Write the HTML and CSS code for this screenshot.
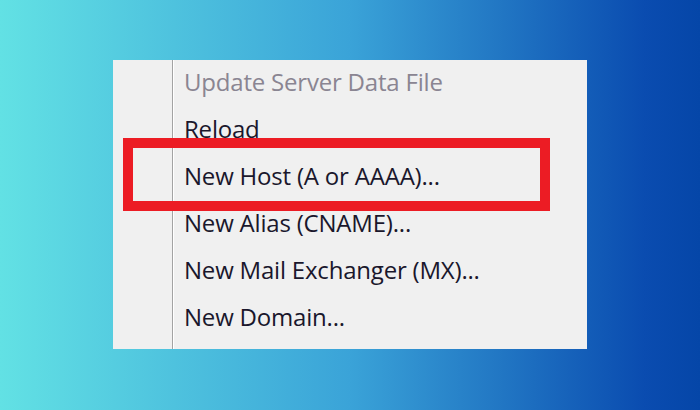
FILE: index.html
```html
<!DOCTYPE html>
<html lang="en">
<head>
<meta charset="utf-8">
<title>DNS context menu</title>
<link rel="stylesheet" href="styles.css">
</head>
<body>
<div class="stage">
  <div class="menu">
    <div class="gutter"></div>
    <ul class="items">
      <li class="item disabled">Update Server Data File</li>
      <li class="item">Reload</li>
      <li class="item highlighted">New Host (A or AAAA)...</li>
      <li class="item">New Alias (CNAME)...</li>
      <li class="item">New Mail Exchanger (MX)...</li>
      <li class="item">New Domain...</li>
    </ul>
    <div class="callout"></div>
  </div>
</div>
</body>
</html>
```
FILE: styles.css
```css
html, body {
  margin: 0;
  padding: 0;
}
body {
  width: 700px;
  height: 410px;
  overflow: hidden;
  font-family: "Open Sans", "Noto Sans", sans-serif;
}
.stage {
  width: 700px;
  height: 410px;
  background: linear-gradient(90deg, #62e1e4 0%, #3aa3d8 50%, #0a4cb0 92%, #0546a8 100%);
  padding: 60px 0 0 113px;
  box-sizing: border-box;
}
.menu {
  position: relative;
  width: 474px;
  height: 289px;
  background: #f0f0f0;
  display: flex;
}
.gutter {
  width: 59px;
  flex: none;
  border-right: 1px solid #a3a3a3;
  box-shadow: 1px 0 0 #ffffff;
}
.items {
  list-style: none;
  margin: -2px 0 0 0;
  padding: 0 0 0 11px;
}
.item {
  height: 47px;
  line-height: 47px;
  font-size: 24px;
  color: #1a172c;
  letter-spacing: -0.2px;
  white-space: nowrap;
}
.item.disabled {
  color: #8a8592;
}
.callout {
  position: absolute;
  left: 10px;
  top: 78px;
  width: 407px;
  height: 53px;
  border: 10.5px solid #ec1c24;
}
```
